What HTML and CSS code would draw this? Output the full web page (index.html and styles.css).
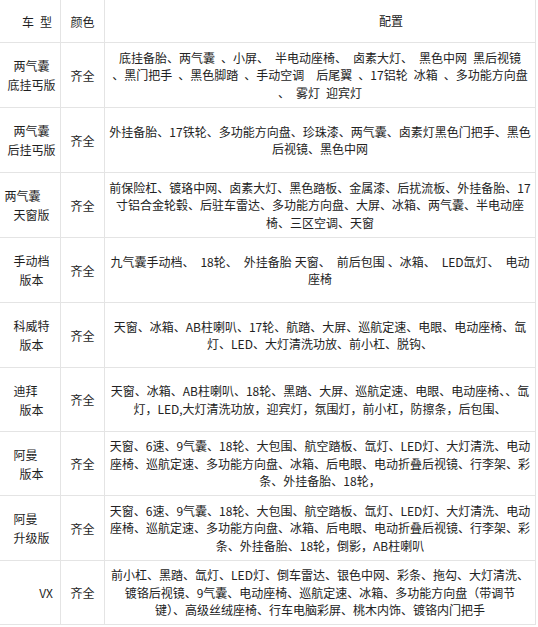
FILE: index.html
```html
<!DOCTYPE html>
<html lang="zh-CN">
<head>
<meta charset="utf-8">
<title>车型配置</title>
<link rel="stylesheet" href="styles.css">
</head>
<body>
<div class="spec">
  <div class="cell model head-model">车&ensp;型</div>
  <div class="cell color">颜色</div>
  <div class="cell conf head-conf">配置</div>

  <div class="cell model"><span class="ln">两气囊</span><span class="ln">底挂丐版</span></div>
  <div class="cell color">齐全</div>
  <div class="cell conf">底挂备胎、两气囊&ensp;、小屏、&ensp;半电动座椅、&ensp;卤素大灯、&ensp;黑色中网&ensp;黑后视镜<br>、黑门把手&ensp;、黑色脚踏&ensp;、手动空调&ensp;&ensp;后尾翼&ensp;、17铝轮&ensp;冰箱&ensp;、多功能方向盘<br>、&ensp;雾灯&ensp;迎宾灯</div>

  <div class="cell model"><span class="ln">两气囊</span><span class="ln">后挂丐版</span></div>
  <div class="cell color">齐全</div>
  <div class="cell conf">外挂备胎、17铁轮、多功能方向盘、珍珠漆、两气囊、卤素灯黑色门把手、黑色<br>后视镜、黑色中网</div>

  <div class="cell model"><span class="ln shift-lg">两气囊</span><span class="ln">天窗版</span></div>
  <div class="cell color">齐全</div>
  <div class="cell conf">前保险杠、镀珞中网、卤素大灯、黑色踏板、金属漆、后扰流板、外挂备胎、17<br>寸铝合金轮毂、后驻车雷达、多功能方向盘、大屏、冰箱、两气囊、半电动座<br>椅、三区空调、天窗</div>

  <div class="cell model"><span class="ln">手动档</span><span class="ln">版本</span></div>
  <div class="cell color">齐全</div>
  <div class="cell conf">九气囊手动档、&ensp;18轮、&ensp;外挂备胎&#8197;天窗、&ensp;前后包围&#8197;、冰箱、&ensp;LED氙灯、&ensp;电动<br>座椅</div>

  <div class="cell model"><span class="ln">科威特</span><span class="ln">版本</span></div>
  <div class="cell color">齐全</div>
  <div class="cell conf">天窗、冰箱、AB柱喇叭、17轮、航踏、大屏、巡航定速、电眼、电动座椅、氙<br>灯、LED、大灯清洗功放、前小杠、脱钩、</div>

  <div class="cell model"><span class="ln shift">迪拜</span><span class="ln">版本</span></div>
  <div class="cell color">齐全</div>
  <div class="cell conf">天窗、冰箱、AB柱喇叭、18轮、黑踏、大屏、巡航定速、电眼、电动座椅、、氙<br>灯，LED,大灯清洗功放，迎宾灯，氛围灯，前小杠，防擦条，后包围、</div>

  <div class="cell model"><span class="ln shift">阿曼</span><span class="ln">版本</span></div>
  <div class="cell color">齐全</div>
  <div class="cell conf">天窗、6速、9气囊、18轮、大包围、航空踏板、氙灯、LED灯、大灯清洗、电动<br>座椅、巡航定速、多功能方向盘、冰箱、后电眼、电动折叠后视镜、行李架、彩<br>条、外挂备胎、18轮，</div>

  <div class="cell model"><span class="ln shift">阿曼</span><span class="ln">升级版</span></div>
  <div class="cell color">齐全</div>
  <div class="cell conf">天窗、6速、9气囊、18轮、大包围、航空踏板、氙灯、LED灯、大灯清洗、电动<br>座椅、巡航定速、多功能方向盘、冰箱、后电眼、电动折叠后视镜、行李架、彩<br>条、外挂备胎、18轮，倒影，AB柱喇叭</div>

  <div class="cell model model-right">VX</div>
  <div class="cell color">齐全</div>
  <div class="cell conf">前小杠、黑踏、氙灯、LED灯、倒车雷达、银色中网、彩条、拖勾、大灯清洗、<br>镀铬后视镜、9气囊、电动座椅、巡航定速、冰箱、多功能方向盘（带调节<br>键）、高级丝绒座椅、行车电脑彩屏、桃木内饰、镀铬内门把手</div>
</div>
</body>
</html>
```

FILE: styles.css
```css
html, body {
  margin: 0;
  padding: 0;
  background: #ffffff;
}

body {
  font-family: "Noto Sans CJK SC", "Noto Sans", sans-serif;
  font-size: 12px;
  color: #222222;
}

.spec {
  display: grid;
  grid-template-columns: 61px 44px 431px;
  grid-template-rows: 43px 65px 65px 65px 65px 65px 64px 64px 65px 64px;
  width: 536px;
}

.cell {
  box-sizing: border-box;
  border-right: 1px solid #e4e4e4;
  border-bottom: 1px solid #e4e4e4;
  display: flex;
  align-items: center;
  justify-content: center;
  text-align: center;
  overflow: hidden;
}

.model {
  flex-direction: column;
  padding-left: 3px;
  line-height: 19px;
  color: #1e1e1e;
}

.ln {
  display: block;
}

.shift {
  padding-right: 12px;
}

.shift-lg {
  padding-right: 18px;
}

.head-model {
  align-items: flex-end;
  padding-right: 8px;
}

.model-right {
  align-items: flex-end;
  padding-right: 7px;
}

.color {
  color: #1e1e1e;
}

.conf {
  padding: 0 4px;
  line-height: 17.5px;
  white-space: nowrap;
}

.head-conf {
  padding-left: 146px;
}
```
